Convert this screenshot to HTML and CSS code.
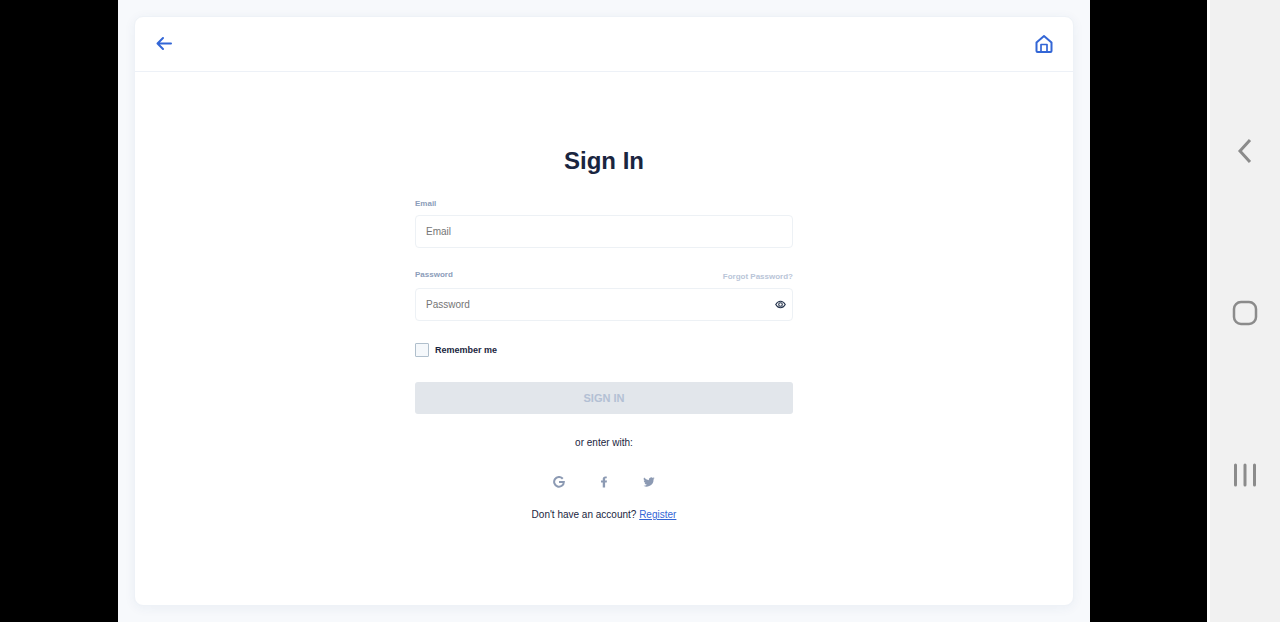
FILE: index.html
```
<!DOCTYPE html>
<html lang="en">
<head>
  <meta charset="UTF-8">
  <meta name="viewport" content="width=device-width, initial-scale=1.0">
  <title>Sign In</title>
  <link rel="stylesheet" href="styles.css">
</head>
<body>
  <div class="stage">
    <div class="app">
      <div class="card">
        <header>
          <a href="#" aria-label="Back">
            <svg width="18" height="18" viewBox="0 0 18 18" fill="none" stroke="currentColor" stroke-width="2" stroke-linecap="round" stroke-linejoin="round">
              <path d="M16 8.500H2.500M8 3L2.500 8.500 8 14"/>
            </svg>
          </a>
          <a href="#" aria-label="Home">
            <svg width="18" height="20" viewBox="0 0 18 20" fill="none" stroke="currentColor" stroke-width="2" stroke-linejoin="round">
              <path d="M1.500 8.500L9 2l7.500 6.500V17q0 1-1 1h-13q-1 0-1-1z"/>
              <path d="M6 18v-7.500h6V18" stroke-width="1.700"/>
            </svg>
          </a>
        </header>

        <main>
          <form>
            <h1>Sign In</h1>

            <div class="label-row">
              <label for="email">Email</label>
            </div>
            <div class="field">
              <input type="email" id="email" placeholder="Email">
            </div>

            <div class="label-row">
              <label for="password">Password</label>
              <a href="#" class="forgot">Forgot Password?</a>
            </div>
            <div class="field">
              <input type="password" id="password" placeholder="Password">
              <button type="button" class="toggle" aria-label="Show password">
                <svg width="11" height="9" viewBox="0 0 22 16" fill="none" stroke="currentColor" stroke-width="2.200">
                  <path d="M1.500 8C4 3.500 7.200 1.500 11 1.500S18 3.500 20.500 8C18 12.500 14.800 14.500 11 14.500S4 12.500 1.500 8z"/>
                  <circle cx="11" cy="8" r="3.600"/>
                </svg>
              </button>
            </div>

            <div class="remember">
              <input type="checkbox" id="remember">
              <label for="remember">Remember me</label>
            </div>

            <button type="submit" class="submit" disabled>SIGN IN</button>

            <p>or enter with:</p>

            <div class="social">
              <a href="#" aria-label="Google">
                <svg width="12" height="12" viewBox="0 0 24 24" fill="none" stroke="currentColor" stroke-width="4">
                  <path d="M19.500 5.500A9.700 9.700 0 1 0 21.700 11.800H12"/>
                </svg>
              </a>
              <a href="#" aria-label="Facebook">
                <svg width="12" height="12" viewBox="0 0 24 24" fill="currentColor">
                  <path d="M18 9l-.6 4h-3.200v10H9.500V13H6V9h3.500V6.200C9.500 2.700 11.500 1 14.700 1c1.300 0 2.800.2 2.800.2v3.500h-1.600c-1.500 0-1.700.8-1.700 1.900V9z"/>
                </svg>
              </a>
              <a href="#" aria-label="Twitter">
                <svg width="12" height="12" viewBox="0 0 24 24" fill="currentColor">
                  <path d="M23 4.600a10 10 0 0 1-2.300.8 5 5 0 0 0 2-2.700 10 10 0 0 1-3 1.200 4.900 4.900 0 0 0-8 4.500A14 14 0 0 1 2.200 3.100a4.900 4.900 0 0 0 1.500 6.600 5 5 0 0 1-2.200-.6c0 2.300 1.600 4.400 3.900 4.900a5 5 0 0 1-2.200.1 4.900 4.900 0 0 0 4.600 3.400A9.900 9.900 0 0 1 1 19.500a13.500 13.500 0 0 0 20-12.400A10 10 0 0 0 23 4.600z"/>
                </svg>
              </a>
            </div>

            <p>Don't have an account? <a href="#" class="register">Register</a></p>
          </form>
        </main>
      </div>
    </div>
  </div>

  <nav aria-label="System">
    <button type="button" aria-label="Back">
      <svg width="26" height="26" viewBox="0 0 26 26" fill="none" stroke="currentColor" stroke-width="3">
        <path d="M18 2L8 13l10 11"/>
      </svg>
    </button>
    <button type="button" aria-label="Home">
      <svg width="26" height="26" viewBox="0 0 26 26" fill="none" stroke="currentColor" stroke-width="2.500">
        <rect x="2" y="2" width="22" height="22" rx="7"/>
      </svg>
    </button>
    <button type="button" aria-label="Recent apps">
      <svg width="26" height="26" viewBox="0 0 26 26" fill="none" stroke="currentColor" stroke-width="3" stroke-linecap="round">
        <path d="M3.500 3v20M13 3v20M22.500 3v20"/>
      </svg>
    </button>
  </nav>
</body>
</html>
```
FILE: styles.css
```
* {
  box-sizing: border-box;
}

body {
  margin: 0;
  min-height: 100vh;
  display: flex;
  background-color: #000;
  color: #1a2540;
  font-family: "Liberation Sans", Arial, sans-serif;
  font-size: 10px;
  line-height: 12px;
}

button {
  padding: 0;
  border: none;
  background: none;
  font-family: inherit;
  cursor: pointer;
}

svg {
  display: block;
}

.stage {
  flex: 1;
  display: flex;
  padding: 0 117px 0 118px;
}

.app {
  flex: 1;
  display: flex;
  padding: 16px;
  background-color: #f7f9fc;
}

.card {
  flex: 1;
  display: flex;
  flex-direction: column;
  border: 1px solid #eef2f7;
  border-radius: 9px;
  background-color: #fff;
  box-shadow: 0 2px 12px rgba(40, 70, 120, 0.06);
}

header {
  display: flex;
  align-items: center;
  justify-content: space-between;
  height: 55px;
  padding: 0 20px;
  border-bottom: 1px solid #edf1f7;
}

header a {
  color: #3366d6;
}

main {
  padding: 72px 20px;
}

form {
  max-width: 378px;
  margin: 0 auto;
}

h1 {
  margin: 0 0 20px;
  font-size: 24px;
  line-height: 34px;
  text-align: center;
}

.label-row {
  display: flex;
  justify-content: space-between;
  margin-bottom: 5px;
  color: #8c9dba;
  font-size: 8px;
  font-weight: bold;
}

.forgot {
  padding-top: 2px;
  color: #b9c5d8;
  text-decoration: none;
}

.field {
  display: flex;
  align-items: center;
  height: 33px;
  margin-bottom: 21px;
  padding-right: 6px;
  border: 1px solid #edf1f5;
  border-radius: 4px;
}

.field input {
  flex: 1;
  min-width: 0;
  padding: 0 10px;
  border: none;
  background: none;
  color: #1a2540;
  font-family: inherit;
  font-size: 10px;
}

.field input::placeholder {
  color: #757575;
}

.toggle {
  color: #26344d;
}

.remember {
  display: flex;
  align-items: center;
  gap: 6px;
  margin: 22px 0 25px;
  font-size: 9px;
  font-weight: bold;
}

.remember input {
  appearance: none;
  width: 14px;
  height: 14px;
  margin: 0;
  border: 1px solid #b0bfcc;
  border-radius: 1px;
  background-color: #f5f8fb;
}

.remember input:checked {
  background-color: #3366d6;
}

.submit {
  display: block;
  width: 100%;
  height: 32px;
  border-radius: 3px;
  background-color: #e2e6eb;
  color: #b3c0d4;
  font-size: 11px;
  font-weight: bold;
}

p {
  margin: 0;
  text-align: center;
}

.submit + p {
  margin-top: 23px;
}

.social {
  display: flex;
  justify-content: center;
  gap: 33px;
  margin: 27px 0 21px;
}

.social a {
  color: #8c9ab3;
}

.register {
  color: #3366d6;
}

nav {
  display: flex;
  flex-direction: column;
  align-items: center;
  justify-content: center;
  gap: 136px;
  width: 73px;
  padding-top: 3px;
  border-left: 3px solid #fff;
  background-color: #f1f1f1;
}

nav button {
  color: #8b8b8b;
}
```
